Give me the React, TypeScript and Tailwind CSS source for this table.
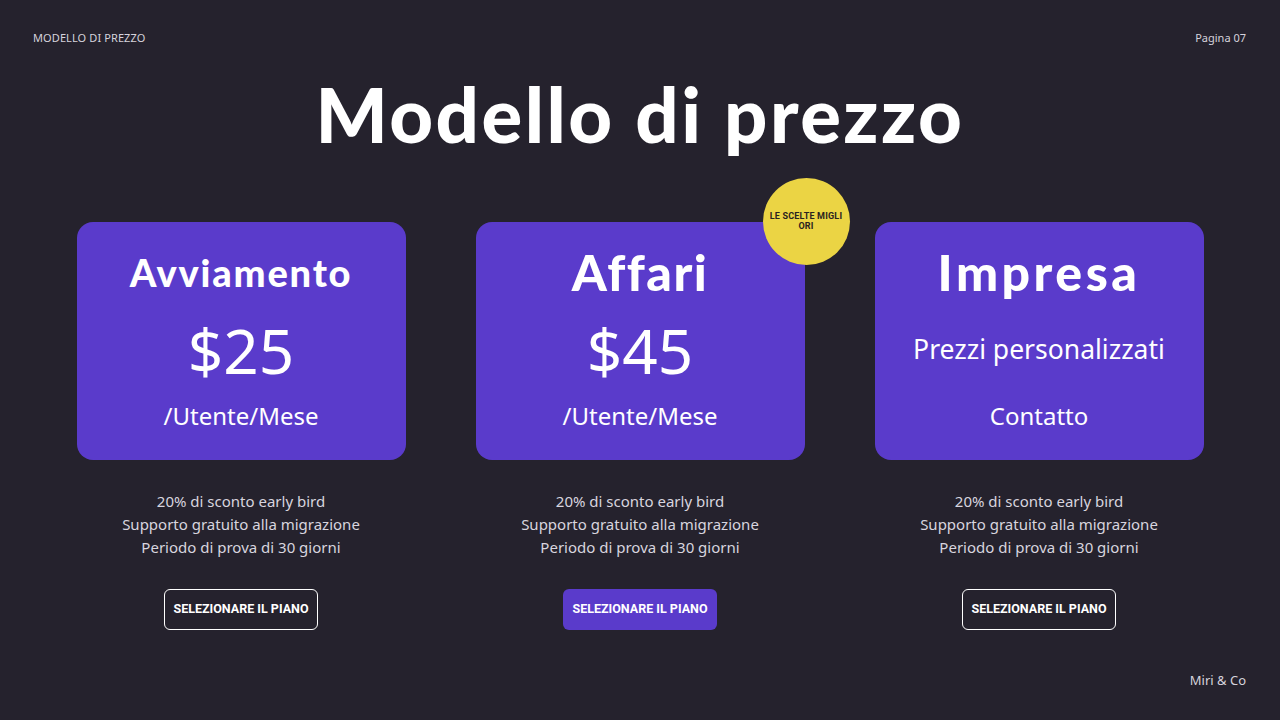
import React from "react";

type Plan = {
  name: string;
  nameClass: string;
  primary: string;
  primaryClass: string;
  secondary: string;
  filled?: boolean;
  badge?: boolean;
};

const plans: Plan[] = [
  {
    name: "Avviamento",
    nameClass: "text-[38px] tracking-[1.8px]",
    primary: "$25",
    primaryClass: "text-[62px]",
    secondary: "/Utente/Mese",
  },
  {
    name: "Affari",
    nameClass: "text-[50px] tracking-[1.5px]",
    primary: "$45",
    primaryClass: "text-[62px]",
    secondary: "/Utente/Mese",
    filled: true,
    badge: true,
  },
  {
    name: "Impresa",
    nameClass: "text-[50px] tracking-[3.5px]",
    primary: "Prezzi personalizzati",
    primaryClass: "text-[26.5px]",
    secondary: "Contatto",
  },
];

function Card({ p }: { p: Plan }) {
  return (
    <div className="flex w-[329px] flex-col items-center">
      <div className="relative flex h-[238px] w-full flex-col items-center rounded-[16px] bg-[#5a3bcb] text-white">
        {p.badge && (
          <div className="absolute right-[-45px] top-[-44px] flex h-[87px] w-[87px] items-center justify-center rounded-full bg-[#ebd444] px-[4px] text-center font-['Roboto','Noto_Sans',sans-serif] text-[9px] font-bold leading-[10px] tracking-[0.2px] text-[#2a2320]">
            LE SCELTE MIGLI
            <br />
            ORI
          </div>
        )}
        <div
          className={`mt-[24px] flex h-[54px] items-center font-['Lato','Noto_Sans',sans-serif] font-black ${p.nameClass}`}
        >
          {p.name}
        </div>
        <div
          className={`mt-[20px] flex h-[60px] items-center font-['Noto_Sans','Open_Sans',sans-serif] leading-none ${p.primaryClass}`}
        >
          {p.primary}
        </div>
        <div className="mt-[14px] flex h-[44px] items-center font-['Noto_Sans','Open_Sans',sans-serif] text-[24px]">
          {p.secondary}
        </div>
      </div>
      <div className="mt-[30px] flex flex-col items-center font-['Noto_Sans','Open_Sans',sans-serif] text-[15px] leading-[23px] text-[#d8d5df]">
        <span>20% di sconto early bird</span>
        <span>Supporto gratuito alla migrazione</span>
        <span>Periodo di prova di 30 giorni</span>
      </div>
      <button
        className={`mt-[30px] flex h-[41px] w-[154px] items-center justify-center rounded-[6px] font-['Roboto','Noto_Sans',sans-serif] text-[12.5px] font-bold text-white ${
          p.filled ? "bg-[#5a3bcb]" : "border-[1.5px] border-white"
        }`}
      >
        SELEZIONARE IL PIANO
      </button>
    </div>
  );
}

export default function App() {
  return (
    <div className="flex h-[720px] w-[1280px] flex-col bg-[#25222d] text-white">
      <div className="flex items-center justify-between px-[33px] pt-[30px] font-['Noto_Sans','Open_Sans',sans-serif] text-[11px] text-[#d6d3dc]">
        <span className="tracking-[0.1px]">MODELLO DI PREZZO</span>
        <span className="mr-[1px]">Pagina 07</span>
      </div>
      <h1 className="mt-[22px] text-center font-['Lato','Noto_Sans',sans-serif] text-[76px] font-black leading-[90px] tracking-[2.5px]">
        Modello di prezzo
      </h1>
      <div className="mt-[63px] flex justify-center gap-[70px]">
        {plans.map((p) => (
          <Card key={p.name} p={p} />
        ))}
      </div>
      <div className="mt-auto flex justify-end px-[34px] pb-[30px] font-['Noto_Sans','Open_Sans',sans-serif] text-[13px] text-[#d6d3dc]">
        Miri &amp; Co
      </div>
    </div>
  );
}
